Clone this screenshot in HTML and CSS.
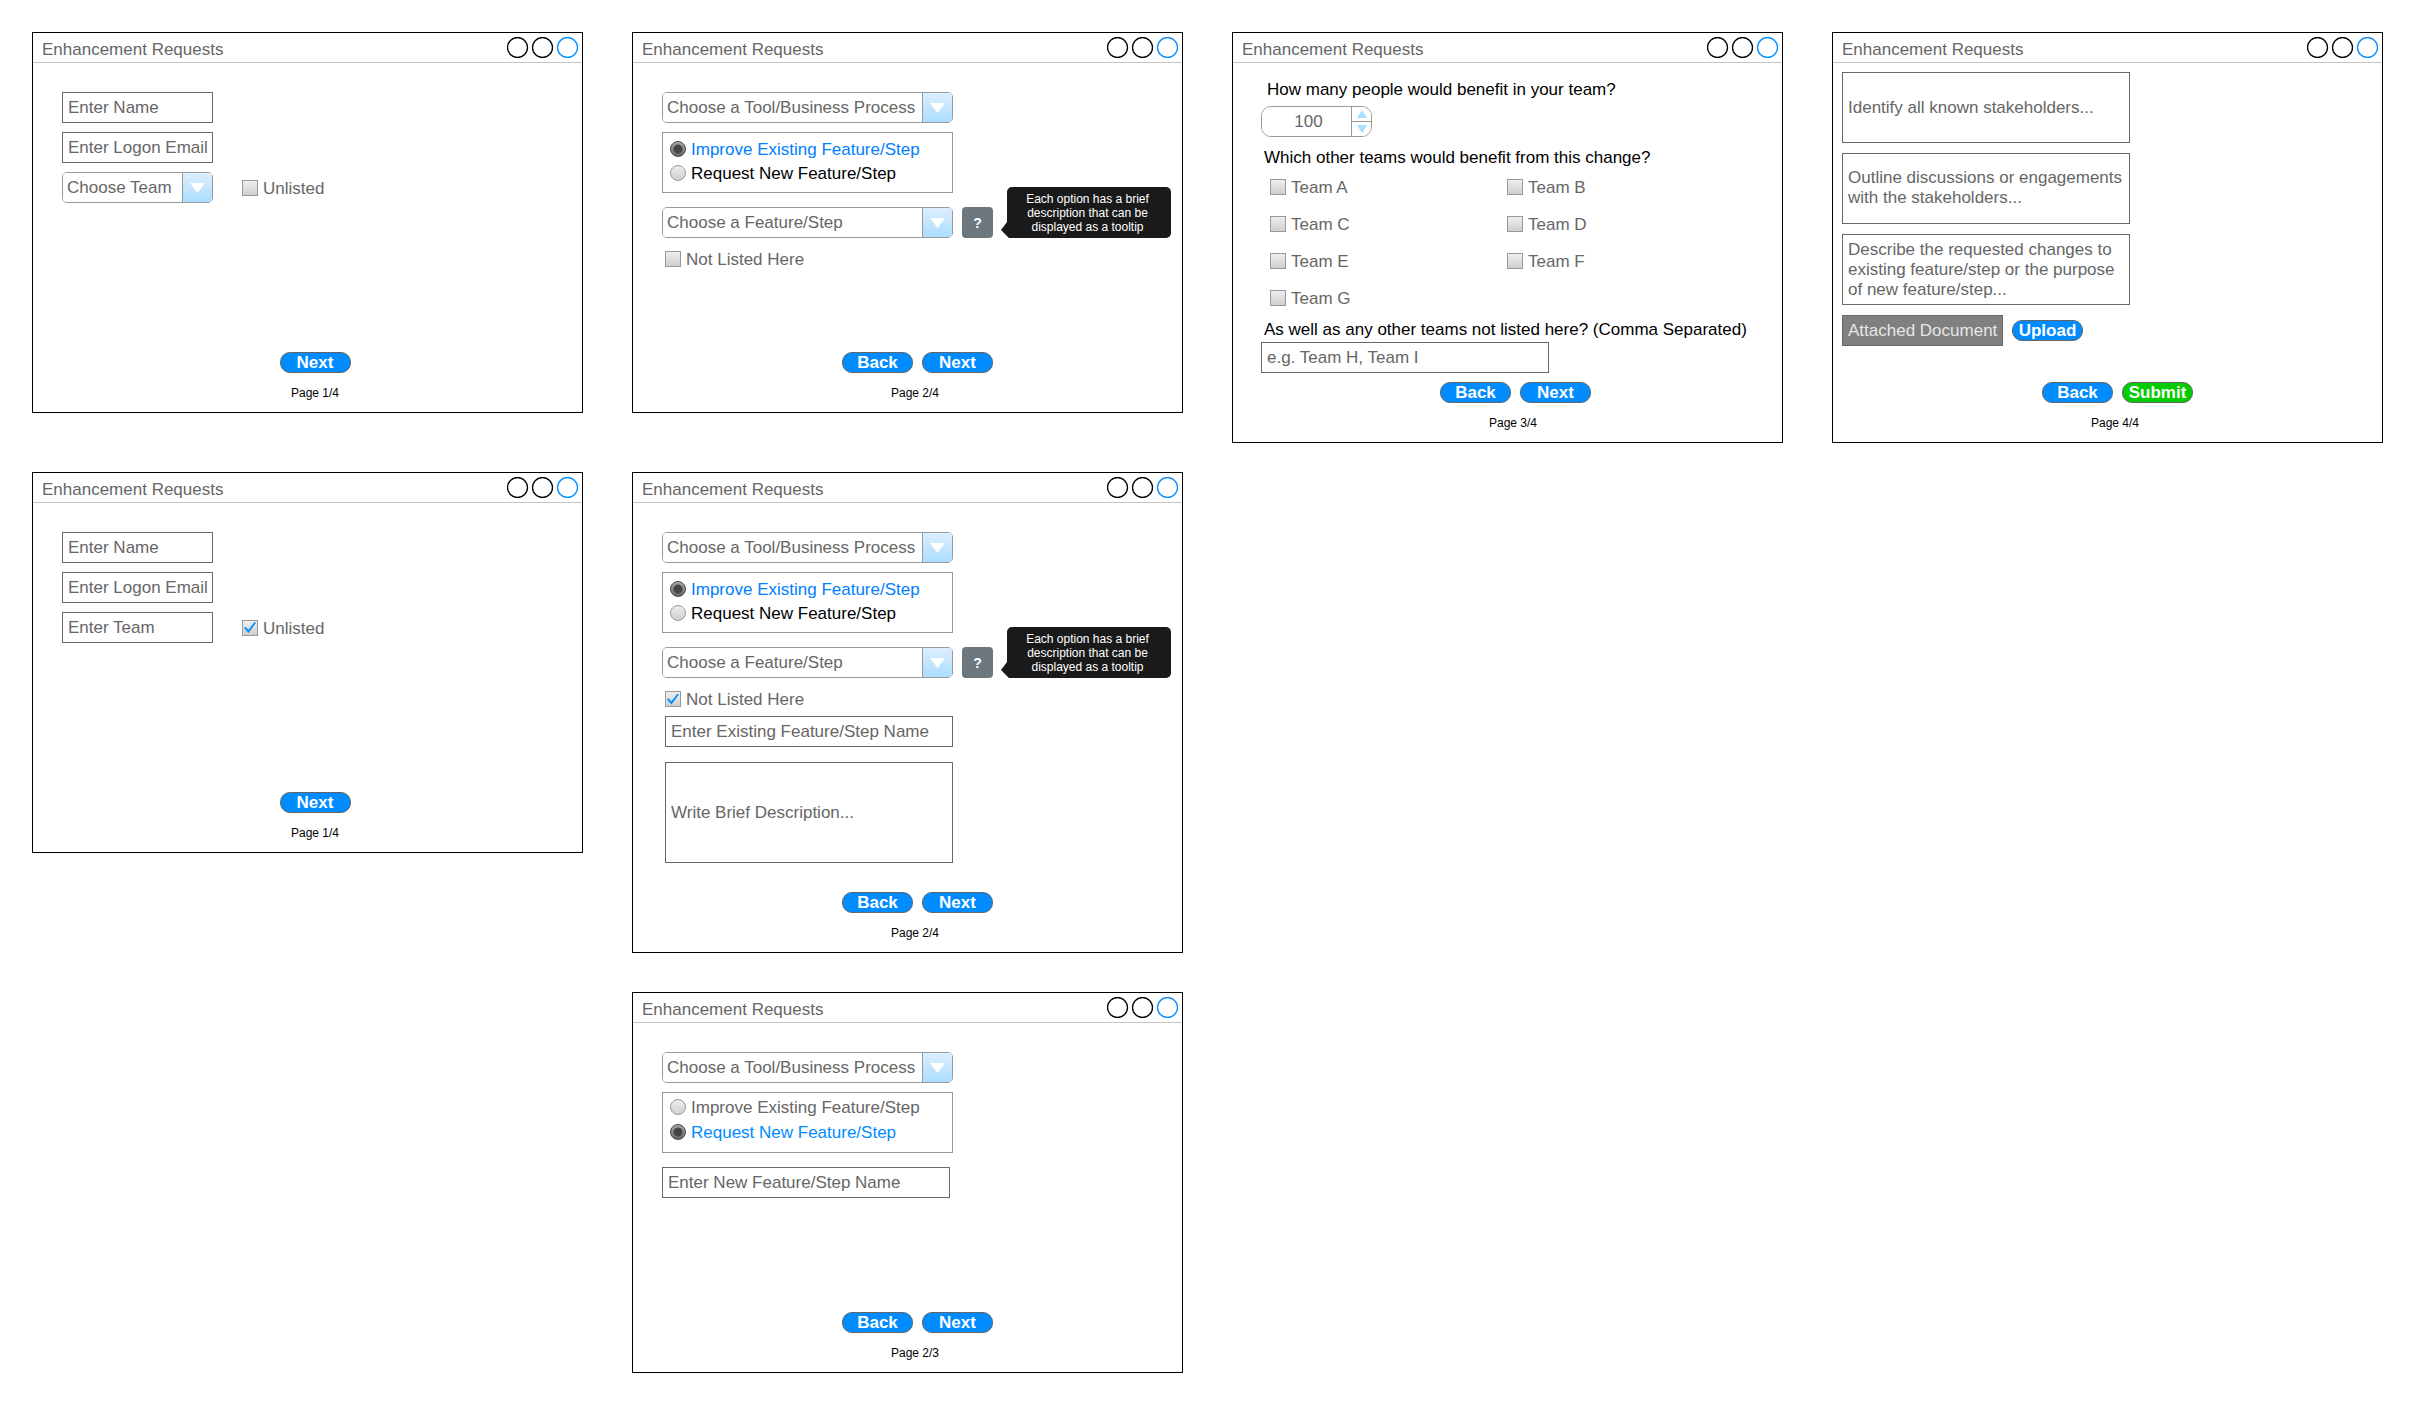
FILE: index.html
```html
<!DOCTYPE html>
<html lang="en">
<head>
<meta charset="utf-8">
<title>Enhancement Requests</title>
<link rel="stylesheet" href="styles.css">
</head>
<body>
<svg class="sprite" aria-hidden="true">
  <symbol id="dots" viewBox="0 0 71 21">
    <circle cx="10.5" cy="10.5" r="10" fill="none" stroke="#000" stroke-width="1.3"/>
    <circle cx="35.5" cy="10.5" r="10" fill="none" stroke="#000" stroke-width="1.3"/>
    <circle cx="60.5" cy="10.5" r="10" fill="none" stroke="#008cff" stroke-width="1.3"/>
  </symbol>
  <symbol id="caret" viewBox="0 0 15 10"><path d="M0 0H15L7.5 10Z" fill="#fff"/></symbol>
</svg>
<main class="board">

  <form class="window col-1 row-1">
    <header class="window-bar"><h2 class="window-title">Enhancement Requests</h2><svg class="dots" aria-hidden="true"><use href="#dots"/></svg></header>
    <div class="fields">
      <input class="field field-short" type="text" placeholder="Enter Name" aria-label="Enter Name">
      <input class="field field-short" type="email" placeholder="Enter Logon Email" aria-label="Enter Logon Email">
      <div class="team-row">
        <div class="select select-short"><select aria-label="Choose Team"><option>Choose Team</option></select><span class="select-arrow"><svg class="caret" aria-hidden="true"><use href="#caret"/></svg></span></div>
        <label class="check"><input type="checkbox">Unlisted</label>
      </div>
    </div>
    <footer class="window-foot">
      <div class="buttons"><button class="button" type="button">Next</button></div>
      <p class="page">Page 1/4</p>
    </footer>
  </form>

  <form class="window col-2 row-1">
    <header class="window-bar"><h2 class="window-title">Enhancement Requests</h2><svg class="dots" aria-hidden="true"><use href="#dots"/></svg></header>
    <div class="fields">
      <div class="select"><select aria-label="Choose a Tool/Business Process"><option>Choose a Tool/Business Process</option></select><span class="select-arrow"><svg class="caret" aria-hidden="true"><use href="#caret"/></svg></span></div>
      <fieldset class="radios" aria-label="Request type">
        <label class="radio"><input type="radio" name="kind" checked>Improve Existing Feature/Step</label>
        <label class="radio"><input type="radio" name="kind">Request New Feature/Step</label>
      </fieldset>
      <div class="feature-row">
        <div class="select"><select aria-label="Choose a Feature/Step"><option>Choose a Feature/Step</option></select><span class="select-arrow"><svg class="caret" aria-hidden="true"><use href="#caret"/></svg></span></div>
        <div class="help">
          <button class="help-button" type="button" aria-describedby="tip-1">?</button>
          <div class="tooltip" id="tip-1" role="tooltip">Each option has a brief description that can be displayed as a tooltip</div>
        </div>
      </div>
      <div class="extra">
        <label class="check"><input type="checkbox">Not Listed Here</label>
      </div>
    </div>
    <footer class="window-foot foot-pair">
      <div class="buttons"><button class="button" type="button">Back</button><button class="button" type="button">Next</button></div>
      <p class="page">Page 2/4</p>
    </footer>
  </form>

  <form class="window col-3 row-1">
    <header class="window-bar"><h2 class="window-title">Enhancement Requests</h2><svg class="dots" aria-hidden="true"><use href="#dots"/></svg></header>
    <div class="fields fields-teams">
      <label class="question question-first" for="people">How many people would benefit in your team?</label>
      <div class="stepper">
        <input id="people" type="number" value="100">
        <span class="stepper-keys">
          <button type="button" aria-label="More"><svg viewBox="0 0 10 8" aria-hidden="true"><path d="M5 0L10 8H0Z"/></svg></button>
          <button type="button" aria-label="Fewer"><svg viewBox="0 0 10 8" aria-hidden="true"><path d="M0 0H10L5 8Z"/></svg></button>
        </span>
      </div>
      <p class="question">Which other teams would benefit from this change?</p>
      <div class="teams">
        <label class="check"><input type="checkbox">Team A</label>
        <label class="check"><input type="checkbox">Team B</label>
        <label class="check"><input type="checkbox">Team C</label>
        <label class="check"><input type="checkbox">Team D</label>
        <label class="check"><input type="checkbox">Team E</label>
        <label class="check"><input type="checkbox">Team F</label>
        <label class="check"><input type="checkbox">Team G</label>
      </div>
      <label class="question" for="others">As well as any other teams not listed here? (Comma Separated)</label>
      <input class="field" id="others" type="text" placeholder="e.g. Team H, Team I">
    </div>
    <footer class="window-foot foot-teams">
      <div class="buttons"><button class="button" type="button">Back</button><button class="button" type="button">Next</button></div>
      <p class="page">Page 3/4</p>
    </footer>
  </form>

  <form class="window window-details col-4 row-1">
    <header class="window-bar"><h2 class="window-title">Enhancement Requests</h2><svg class="dots" aria-hidden="true"><use href="#dots"/></svg></header>
    <div class="fields fields-details">
      <textarea class="field area lines-1" placeholder="Identify all known stakeholders..." aria-label="Stakeholders"></textarea>
      <textarea class="field area lines-2" placeholder="Outline discussions or engagements with the stakeholders..." aria-label="Engagements"></textarea>
      <textarea class="field area lines-3" placeholder="Describe the requested changes to existing feature/step or the purpose of new feature/step..." aria-label="Requested changes"></textarea>
      <div class="upload-row">
        <input class="field field-file" type="text" value="Attached Document" readonly aria-label="Attached Document">
        <button class="button" type="button">Upload</button>
      </div>
    </div>
    <footer class="window-foot foot-pair">
      <div class="buttons"><button class="button" type="button">Back</button><button class="button button-submit" type="button">Submit</button></div>
      <p class="page">Page 4/4</p>
    </footer>
  </form>

  <form class="window col-1 row-2">
    <header class="window-bar"><h2 class="window-title">Enhancement Requests</h2><svg class="dots" aria-hidden="true"><use href="#dots"/></svg></header>
    <div class="fields">
      <input class="field field-short" type="text" placeholder="Enter Name" aria-label="Enter Name">
      <input class="field field-short" type="email" placeholder="Enter Logon Email" aria-label="Enter Logon Email">
      <div class="team-row">
        <input class="field field-short" type="text" placeholder="Enter Team" aria-label="Enter Team">
        <label class="check"><input type="checkbox" checked>Unlisted</label>
      </div>
    </div>
    <footer class="window-foot">
      <div class="buttons"><button class="button" type="button">Next</button></div>
      <p class="page">Page 1/4</p>
    </footer>
  </form>

  <form class="window col-2 row-2">
    <header class="window-bar"><h2 class="window-title">Enhancement Requests</h2><svg class="dots" aria-hidden="true"><use href="#dots"/></svg></header>
    <div class="fields">
      <div class="select"><select aria-label="Choose a Tool/Business Process"><option>Choose a Tool/Business Process</option></select><span class="select-arrow"><svg class="caret" aria-hidden="true"><use href="#caret"/></svg></span></div>
      <fieldset class="radios" aria-label="Request type">
        <label class="radio"><input type="radio" name="kind" checked>Improve Existing Feature/Step</label>
        <label class="radio"><input type="radio" name="kind">Request New Feature/Step</label>
      </fieldset>
      <div class="feature-row">
        <div class="select"><select aria-label="Choose a Feature/Step"><option>Choose a Feature/Step</option></select><span class="select-arrow"><svg class="caret" aria-hidden="true"><use href="#caret"/></svg></span></div>
        <div class="help">
          <button class="help-button" type="button" aria-describedby="tip-2">?</button>
          <div class="tooltip" id="tip-2" role="tooltip">Each option has a brief description that can be displayed as a tooltip</div>
        </div>
      </div>
      <div class="extra">
        <label class="check"><input type="checkbox" checked>Not Listed Here</label>
        <input class="field" type="text" placeholder="Enter Existing Feature/Step Name" aria-label="Existing feature or step name">
        <textarea class="field area area-tall" placeholder="Write Brief Description..." aria-label="Brief description"></textarea>
      </div>
    </div>
    <footer class="window-foot foot-pair">
      <div class="buttons"><button class="button" type="button">Back</button><button class="button" type="button">Next</button></div>
      <p class="page">Page 2/4</p>
    </footer>
  </form>

  <form class="window col-2 row-3">
    <header class="window-bar"><h2 class="window-title">Enhancement Requests</h2><svg class="dots" aria-hidden="true"><use href="#dots"/></svg></header>
    <div class="fields">
      <div class="select"><select aria-label="Choose a Tool/Business Process"><option>Choose a Tool/Business Process</option></select><span class="select-arrow"><svg class="caret" aria-hidden="true"><use href="#caret"/></svg></span></div>
      <fieldset class="radios radios-new" aria-label="Request type">
        <label class="radio"><input type="radio" name="kind">Improve Existing Feature/Step</label>
        <label class="radio"><input type="radio" name="kind" checked>Request New Feature/Step</label>
      </fieldset>
      <input class="field field-new" type="text" placeholder="Enter New Feature/Step Name" aria-label="New feature or step name">
    </div>
    <footer class="window-foot foot-pair">
      <div class="buttons"><button class="button" type="button">Back</button><button class="button" type="button">Next</button></div>
      <p class="page">Page 2/3</p>
    </footer>
  </form>

</main>
</body>
</html>
```
FILE: styles.css
```css
* { box-sizing: border-box; }

body {
  margin: 0;
  background: #fff;
  color: #666;
  font: 17px/20px "Liberation Sans", Arial, sans-serif;
}

h2, p, fieldset { margin: 0; padding: 0; }
h2 { font: inherit; }
input, select, textarea, button { margin: 0; font: inherit; color: inherit; }
.sprite { display: none; }

/* Board of wizard steps: one column per page, variants stacked below */
.board {
  display: grid;
  grid-template-columns: repeat(4, minmax(0, 1fr));
  gap: 29px 49px;
  align-items: start;
  padding: 32px;
}
.col-1 { grid-column: 1; }
.col-2 { grid-column: 2; }
.col-3 { grid-column: 3; }
.col-4 { grid-column: 4; }
.row-1 { grid-row: 1; }
.row-2 { grid-row: 2; }
.row-3 { grid-row: 3; margin-top: 10px; }

.window {
  display: flex;
  flex-direction: column;
  min-height: 381px;
  border: 1px solid #000;
  background: #fff;
}
.window-details { min-height: 411px; }
.window-bar {
  display: flex;
  justify-content: space-between;
  align-items: center;
  height: 30px;
  padding: 0 4px 0 9px;
  border-bottom: 1px solid #c4c4c4;
}
.window-title { padding-top: 4px; }
.dots { width: 71px; height: 21px; overflow: visible; }

.fields {
  display: flex;
  flex-direction: column;
  align-items: flex-start;
  gap: 9px;
  padding: 29px;
}

/* Text fields */
.field {
  width: 288px;
  height: 31px;
  padding: 0 2px 0 5px;
  border: 1px solid #666;
  border-radius: 0;
  background: #fff;
}
.field::placeholder { color: #666; opacity: 1; }
.field-short { width: 151px; }
.field-new { margin-top: 5px; }
.field-file {
  width: 161px;
  background: #808080;
  color: #e6e6e6;
}
.area {
  display: block;
  height: 71px;
  overflow: hidden;
  resize: none;
}
.lines-1 { padding-top: 25px; }
.lines-2 { padding-top: 14px; }
.lines-3 { padding-top: 5px; }
.area-tall { height: 101px; padding-top: 40px; }

/* Drop-downs */
.select {
  display: grid;
  grid-template-columns: minmax(0, 1fr) 30px;
  width: 291px;
  height: 31px;
  border: 1px solid #999;
  border-radius: 5px;
  overflow: hidden;
}
.select-short { width: 151px; }
.select select {
  grid-area: 1 / 1 / 2 / 3;
  appearance: none;
  padding: 1px 0 0 4px;
  border: 0;
  background: #fff;
}
.select-arrow {
  display: grid;
  grid-area: 1 / 2;
  place-items: center;
  border-left: 1px solid #999;
  background: linear-gradient(#ddeeff, #aaddff);
  pointer-events: none;
}
.caret { width: 15px; height: 10px; }

/* Tick boxes and radios */
.check, .radio {
  display: flex;
  align-items: flex-start;
  gap: 5px;
  height: 20px;
  line-height: 22px;
}
.check input, .radio input {
  display: grid;
  place-items: center;
  appearance: none;
  width: 16px;
  height: 16px;
  margin-top: 2px;
  border: 1px solid #999;
  background: linear-gradient(#eee, #cfcfcf);
}
.check input:checked::before {
  content: "";
  width: 12px;
  height: 11px;
  background: #008cff;
  clip-path: polygon(0 55%, 14% 44%, 36% 72%, 88% 0, 100% 7%, 38% 100%);
}
.radio input { border-radius: 50%; }
.radio input:checked {
  border-color: #444;
  background: radial-gradient(circle, #444 4px, transparent 5px), linear-gradient(#aaa, #666);
}
.radios {
  display: flex;
  flex-direction: column;
  gap: 4px;
  width: 291px;
  padding: 6px 7px 9px;
  border: 1px solid #999;
}
.radio { color: #000; }
.radio:has(:checked) { color: #007fff; }
.radios-new { gap: 5px; padding: 4px 7px 10px; }
.radios-new .radio { color: #666; }
.radios-new .radio:has(:checked) { color: #008cff; }

.team-row { display: flex; align-items: center; gap: 29px; }
.feature-row { display: flex; gap: 9px; margin-top: 5px; }
.extra {
  display: flex;
  flex-direction: column;
  gap: 15px;
  padding: 2px 0 0 3px;
}
.extra .check + .field { margin-top: -8px; }

/* Help button with its tooltip */
.help { position: relative; }
.help-button {
  display: block;
  width: 31px;
  height: 31px;
  padding: 0;
  border: 0;
  border-radius: 4px;
  background: #6c777e;
  color: #fff;
  font-size: 14px;
  font-weight: bold;
}
.tooltip {
  position: absolute;
  bottom: 0;
  left: calc(100% + 14px);
  width: 164px;
  padding: 5px 20px 4px 17px;
  border-radius: 5px;
  background: #1a1a1a;
  color: #fff;
  font-size: 12px;
  line-height: 14px;
  text-align: center;
}
.tooltip::before {
  content: "";
  position: absolute;
  bottom: 0;
  left: -6px;
  width: 12px;
  height: 16px;
  background: #1a1a1a;
  clip-path: polygon(0 50%, 50% 0, 100% 0, 100% 100%, 66% 100%);
}

/* Team impact page */
.fields-teams { gap: 0; padding: 17px 28px 9px; }
.question { padding-left: 3px; color: #000; }
.question-first { padding-left: 6px; }
.stepper {
  display: flex;
  width: 111px;
  height: 31px;
  margin: 6px 0 11px;
  border: 1px solid #999;
  border-radius: 10px;
  overflow: hidden;
}
.stepper input {
  flex: 1;
  min-width: 0;
  padding: 0 0 0 4px;
  border: 0;
  text-align: center;
  appearance: textfield;
}
.stepper input::-webkit-inner-spin-button { display: none; }
.stepper-keys {
  display: flex;
  flex-direction: column;
  width: 20px;
  border-left: 1px solid #999;
}
.stepper-keys button {
  display: grid;
  flex: 1;
  place-items: center;
  padding: 0;
  border: 0;
  background: #fff;
}
.stepper-keys button + button { border-top: 1px solid #999; }
.stepper-keys svg { width: 10px; height: 8px; fill: #aaddff; }
.teams {
  display: grid;
  grid-template-columns: 237px 1fr;
  row-gap: 17px;
  margin: 9px 0 12px 9px;
}
.fields-teams > .field { margin-top: 2px; }

/* Details page */
.fields-details { gap: 10px; padding: 9px; }
.upload-row { display: flex; align-items: center; gap: 9px; }

/* Window footer */
.window-foot {
  display: flex;
  flex-direction: column;
  align-items: center;
  gap: 13px;
  margin-top: auto;
  padding: 0 0 12px 15px;
}
.buttons { display: flex; gap: 9px; }
.foot-pair .buttons { padding-left: 5px; }
.foot-teams { padding-left: 11px; }
.foot-teams .buttons { padding-left: 5px; }
.button {
  width: 71px;
  height: 21px;
  padding: 0;
  border: 1px solid #666;
  border-radius: 10px;
  background: #008cff;
  color: #fff;
  font-weight: bold;
  line-height: 19px;
}
.button-submit { background: #00cc00; }
.page {
  color: #000;
  font-size: 12px;
  line-height: 14px;
}

@media (max-width: 2200px) {
  .board { grid-template-columns: repeat(4, minmax(551px, 1fr)); }
}
```
